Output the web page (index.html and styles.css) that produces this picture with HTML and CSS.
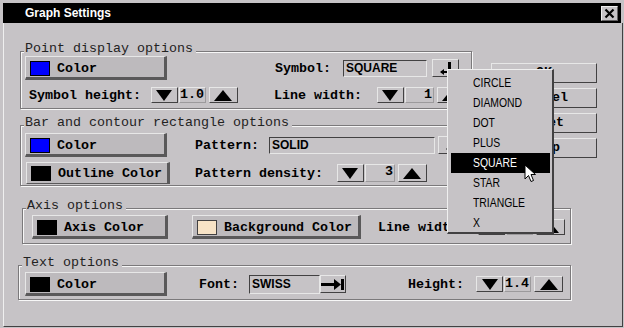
FILE: index.html
```html
<!DOCTYPE html>
<html>
<head>
<meta charset="utf-8">
<title>Graph Settings</title>
<link rel="stylesheet" href="styles.css">
</head>
<body>
<div class="window">
  <div class="titlebar">
    <span class="title">Graph Settings</span>
    <span class="close"><svg width="11" height="11" viewBox="0 0 11 11"><path d="M1.5 1.5 L9.5 9.5 M9.5 1.5 L1.5 9.5" stroke="#000" stroke-width="2.2" fill="none"/></svg></span>
  </div>
  <div class="panel">
    <div class="top">
      <div class="left-col">
        <div class="group g-point">
          <div class="legend">Point display options</div>
          <div class="row r-tall">
            <div class="cbtn w-color"><span class="swatch blue"></span>Color</div>
            <span class="lbl m-symbol">Symbol:</span>
            <span class="field f-symbol">SQUARE</span>
            <span class="ddbtn m-dd"><svg width="14" height="14" viewBox="0 0 14 14"><path d="M9 1 H12 V12 H2 V10 H9 Z" fill="#000"/><path d="M1 11 L5 8 V14 Z" fill="#000"/></svg></span>
          </div>
          <div class="row r-spin">
            <span class="lbl m-sh">Symbol height:</span>
            <div class="spin m-spin1">
              <span class="sbtn"><span class="tri-down"></span></span>
              <span class="sval">1.0</span>
              <span class="sbtn up"><span class="tri-up"></span></span>
            </div>
            <span class="lbl m-lw">Line width:</span>
            <div class="spin m-spin2">
              <span class="sbtn"><span class="tri-down"></span></span>
              <span class="sval w29">1</span>
              <span class="sbtn up"><span class="tri-up"></span></span>
            </div>
          </div>
        </div>
        <div class="group g-bar">
          <div class="legend">Bar and contour rectangle options</div>
          <div class="row r-tall">
            <div class="cbtn w-color"><span class="swatch blue"></span>Color</div>
            <span class="lbl m-pat">Pattern:</span>
            <span class="field f-pattern">SOLID</span>
            <span class="ddbtn m-dd2"><svg width="14" height="14" viewBox="0 0 14 14"><path d="M9 1 H12 V12 H2 V10 H9 Z" fill="#000"/><path d="M1 11 L5 8 V14 Z" fill="#000"/></svg></span>
          </div>
          <div class="row r-outline">
            <div class="cbtn w-outline"><span class="swatch black"></span>Outline Color</div>
            <span class="lbl m-pd">Pattern density:</span>
            <div class="spin tall m-spin3">
              <span class="sbtn"><span class="tri-down"></span></span>
              <span class="sval w30">3</span>
              <span class="sbtn up"><span class="tri-up"></span></span>
            </div>
          </div>
        </div>
      </div>
      <div class="buttons">
        <span class="pbtn">OK</span>
        <span class="pbtn">Cancel</span>
        <span class="pbtn">Reset</span>
        <span class="pbtn">Help</span>
      </div>
    </div>
    <div class="group g-axis">
      <div class="legend">Axis options</div>
      <div class="row r-tall">
        <div class="cbtn w-axis"><span class="swatch black"></span>Axis Color</div>
        <div class="cbtn w-bg m-bg"><span class="swatch cream"></span>Background Color</div>
        <span class="lbl m-alw">Line width:</span>
        <div class="spin m-spin4">
          <span class="sbtn"><span class="tri-down"></span></span>
          <span class="sval">1</span>
          <span class="sbtn up"><span class="tri-up"></span></span>
        </div>
      </div>
    </div>
    <div class="group g-text">
      <div class="legend">Text options</div>
      <div class="row r-tall">
        <div class="cbtn w-color"><span class="swatch black"></span>Color</div>
        <span class="lbl m-font">Font:</span>
        <span class="field f-font">SWISS</span>
        <span class="ddbtn arrow"><svg width="24" height="12" viewBox="0 0 24 12"><rect x="0" y="5" width="16" height="3" fill="#000"/><path d="M13 1 L20 6.5 L13 12 Z" fill="#000"/><rect x="20" y="1" width="3" height="11" fill="#000"/></svg></span>
        <span class="lbl m-height">Height:</span>
        <div class="spin m-spin5">
          <span class="sbtn"><span class="tri-down"></span></span>
          <span class="sval">1.4</span>
          <span class="sbtn up"><span class="tri-up"></span></span>
        </div>
      </div>
    </div>
  </div>
  <ul class="menu">
    <li><span>CIRCLE</span></li>
    <li><span>DIAMOND</span></li>
    <li><span>DOT</span></li>
    <li><span>PLUS</span></li>
    <li class="sel"><span>SQUARE</span></li>
    <li><span>STAR</span></li>
    <li><span>TRIANGLE</span></li>
    <li><span>X</span></li>
  </ul>
  <svg class="cursor" width="13" height="20" viewBox="0 0 13 20"><path d="M1 1 L1 15 L4.5 11.5 L7 17.5 L9.5 16.5 L7 10.5 L11.5 10.5 Z" fill="#fff" stroke="#000" stroke-width="1"/></svg>
</div>
</body>
</html>
```
FILE: styles.css
```css
* { box-sizing: border-box; }
html, body { margin: 0; padding: 0; }
body {
  width: 624px;
  height: 328px;
  overflow: hidden;
  background: #c6c3c6;
  font-family: "Liberation Mono", "DejaVu Sans Mono", monospace;
  font-size: 13.33px;
  color: #000;
}
.window {
  position: relative;
  width: 624px;
  height: 328px;
  padding: 3px 1px 1px 3px;
  background: #c6c3c6;
}
.titlebar {
  height: 20px;
  width: 618px;
  background: #000;
  display: flex;
  align-items: center;
  justify-content: space-between;
  padding: 0 3px 0 22px;
}
.title {
  color: #fff;
  font-family: "Liberation Sans", Arial, sans-serif;
  font-weight: bold;
  font-size: 12px;
}
.close {
  width: 17px;
  height: 15px;
  background: #c6c3c6;
  border: 1px solid;
  border-color: #efefef #636163 #636163 #efefef;
  display: flex;
  align-items: center;
  justify-content: center;
}
.panel {
  height: 304px;
  border-left: 1px solid #efefef;
  border-right: 1px solid #424142;
  border-bottom: 1px solid #424142;
}
.top { display: flex; align-items: flex-start; }
.left-col { display: flex; flex-direction: column; }

.group {
  position: relative;
  border: 1px solid #7b797b;
  box-shadow: 1px 1px 0 #f7f7f7, inset 1px 1px 0 #f7f7f7;
}
.legend {
  position: absolute;
  left: 3px;
  top: -10px;
  line-height: 14px;
  padding: 0 3px 0 1px;
  background: #c6c3c6;
  color: #222;
}
.row { display: flex; align-items: center; }
.r-tall { height: 24px; }
.r-spin { height: 16px; margin-top: 7px; }
.r-outline { height: 22px; margin-top: 5px; }

.g-point { margin: 28px 0 0 16px; width: 452px; height: 58px; padding: 4px 0 0 4px; }
.g-bar { margin: 16px 0 0 16px; width: 452px; height: 61px; padding: 7px 0 0 4px; }
.g-axis { margin: 22px 0 0 18px; width: 549px; height: 36px; padding: 6px 0 0 9px; }
.g-text { margin: 21px 0 0 14px; width: 553px; height: 35px; padding: 6px 0 0 6px; }

.lbl { font-weight: bold; white-space: pre; }
.cbtn {
  display: flex;
  align-items: center;
  height: 24px;
  border-style: solid;
  border-width: 1px 3px 3px 1px;
  border-color: #e7e7e7 #5a595a #5a595a #e7e7e7;
  background: #bdbabd;
  padding: 2px 0 0 4px;
  font-weight: bold;
  white-space: pre;
  gap: 7px;
}
.w-color { width: 142px; }
.w-outline { width: 144px; height: 22px; margin-left: 1px; border-bottom-width: 1px; padding-top: 1px; }
.w-axis { width: 136px; }
.w-bg { width: 169px; }
.swatch {
  width: 20px;
  height: 15px;
  border: 1px solid #000;
  flex: none;
}
.blue { background: #0000ff; }
.black { background: #000; }
.cream { background: #f7e3c6; border-color: #424142; }

.field {
  height: 17px;
  border: 1px solid;
  border-color: #424142 #e7e7e7 #e7e7e7 #424142;
  font-family: "Liberation Sans", Arial, sans-serif;
  font-weight: bold;
  font-size: 12px;
  line-height: 15px;
  padding-left: 2px;
}
.f-symbol { width: 84px; margin-left: 12px; }
.f-pattern { width: 166px; margin-left: 10px; }
.f-font { width: 71px; margin-left: 10px; height: 19px; line-height: 17px; }

.ddbtn {
  width: 27px;
  height: 18px;
  border: 1px solid;
  border-color: #e7e7e7 #424142 #424142 #e7e7e7;
  display: flex;
  align-items: center;
  justify-content: center;
}
.m-dd { margin-left: 5px; }
.m-dd2 { margin-left: 3px; }
.arrow { width: 26px; height: 18px; }

.m-symbol { margin-left: 108px; }
.m-sh { margin-left: 4px; }
.m-spin1 { margin-left: 10px; }
.m-lw { margin-left: 36px; }
.m-spin2 { margin-left: 15px; }
.m-pat { margin-left: 28px; }
.m-pd { margin-left: 25px; }
.m-spin3 { margin-left: 14px; }
.m-bg { margin-left: 24px; }
.m-alw { margin-left: 17px; }
.m-spin4 { margin-left: 12px; }
.m-font { margin-left: 32px; }
.m-height { margin-left: 62px; }
.m-spin5 { margin-left: 12px; }

.spin { display: flex; height: 16px; }
.spin.tall { height: 18px; }
.sbtn {
  width: 27px;
  height: 100%;
  border: 1px solid;
  border-color: #e7e7e7 #424142 #424142 #e7e7e7;
  display: flex;
  align-items: center;
  justify-content: center;
}
.sbtn.up { width: 29px; margin-left: 3px; }
.sval {
  width: 27px;
  height: 100%;
  margin-left: 1px;
  border: 1px solid;
  border-color: #e7e7e7 #9c9a9c #9c9a9c #e7e7e7;
  text-align: right;
  font-weight: bold;
  line-height: 14px;
  padding-right: 1px;
}
.w29 { width: 29px; }
.w30 { width: 30px; }
.tri-down {
  width: 0; height: 0;
  border-left: 8px solid transparent;
  border-right: 8px solid transparent;
  border-top: 11px solid #000;
}
.tri-up {
  width: 0; height: 0;
  border-left: 9px solid transparent;
  border-right: 9px solid transparent;
  border-bottom: 11px solid #000;
}

.buttons {
  display: flex;
  flex-direction: column;
  gap: 5px;
  margin: 40px 0 0 19px;
}
.pbtn {
  width: 106px;
  height: 20px;
  border: 1px solid;
  border-color: #e7e7e7 #424142 #424142 #e7e7e7;
  text-align: center;
  font-weight: bold;
  line-height: 18px;
}

.menu {
  position: absolute;
  left: 447px;
  top: 69px;
  width: 107px;
  height: 165px;
  margin: 0;
  padding: 3px 2px 0 3px;
  list-style: none;
  background: #c6c3c6;
  border-left: 1px solid #efefef;
  border-top: 1px solid #efefef;
  border-right: 2px solid #424142;
  border-bottom: 2px solid #424142;
  font-family: "Liberation Sans", Arial, sans-serif;
  font-size: 13px;
}
.menu li {
  height: 20px;
  line-height: 20px;
  padding-left: 22px;
  color: #000;
}
.menu li span {
  display: inline-block;
  transform: scaleX(0.8);
  transform-origin: left center;
}
.menu li.sel { background: #000; color: #fff; }
.cursor { position: absolute; left: 524px; top: 164px; }
```
